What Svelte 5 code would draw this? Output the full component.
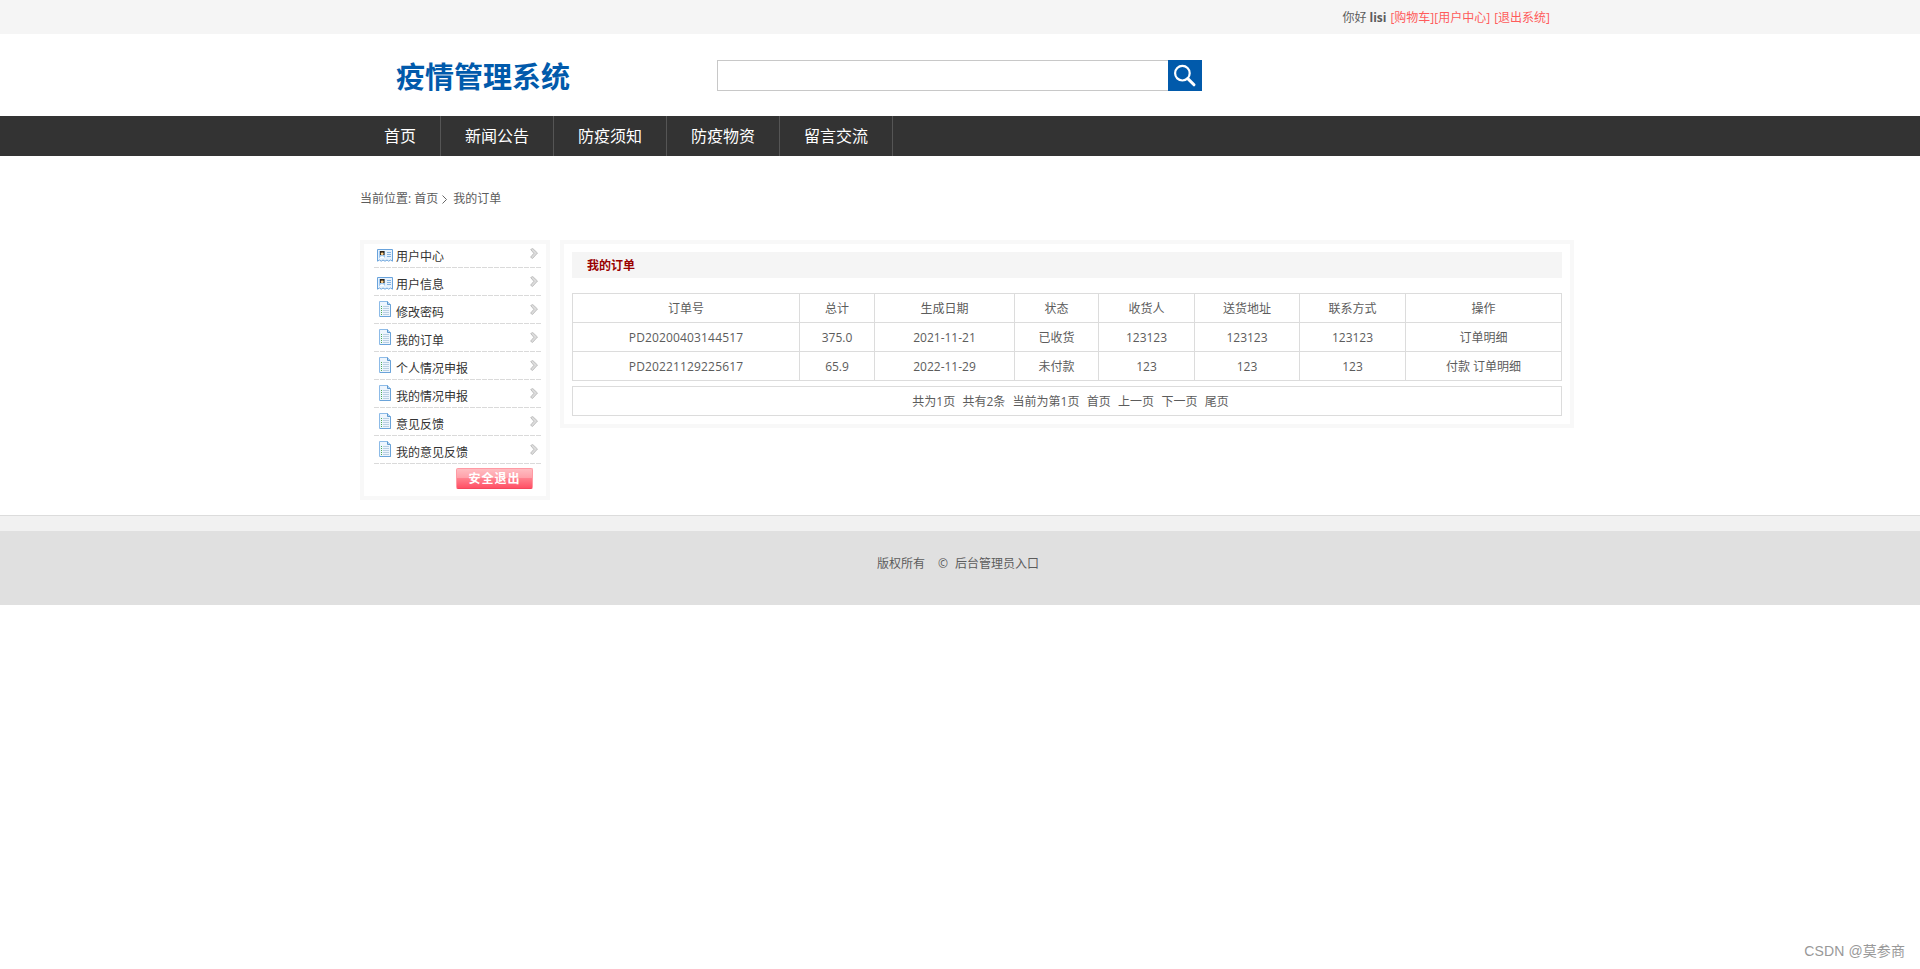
<script>
  const nav = ['首页', '新闻公告', '防疫须知', '防疫物资', '留言交流'];
  const menu = [
    { label: '用户中心', icon: 'card' },
    { label: '用户信息', icon: 'card' },
    { label: '修改密码', icon: 'doc' },
    { label: '我的订单', icon: 'doc' },
    { label: '个人情况申报', icon: 'doc' },
    { label: '我的情况申报', icon: 'doc' },
    { label: '意见反馈', icon: 'doc' },
    { label: '我的意见反馈', icon: 'doc' }
  ];
  const columns = ['订单号', '总计', '生成日期', '状态', '收货人', '送货地址', '联系方式', '操作'];
  const widths = [227, 75, 140, 84, 96, 105, 106, 156];
  const orders = [
    ['PD20200403144517', '375.0', '2021-11-21', '已收货', '123123', '123123', '123123', '订单明细'],
    ['PD20221129225617', '65.9', '2022-11-29', '未付款', '123', '123', '123', '付款 订单明细']
  ];
  const pager = ['共为1页', '共有2条', '当前为第1页', '首页', '上一页', '下一页', '尾页'];
</script>

<div class="page">
  <div class="topbar">
    <div class="greet">
      <span class="hello">你好</span><b>lisi</b><a class="cart">[购物车]</a><a class="center">[用户中心]</a><a>[退出系统]</a>
    </div>
  </div>

  <header>
    <h1>疫情管理系统</h1>
    <div class="search">
      <input type="text" aria-label="搜索" />
      <button aria-label="搜索">
        <svg width="34" height="31" viewBox="0 0 34 31" fill="none" stroke="#fff">
          <circle cx="14.4" cy="13.2" r="7.3" stroke-width="2.2" />
          <path d="M19.8 18.6 26 24.8" stroke-width="3" stroke-linecap="round" />
        </svg>
      </button>
    </div>
  </header>

  <nav>
    {#each nav as item}<a>{item}</a>{/each}
  </nav>

  <div class="crumb">
    <span>当前位置:</span><span class="home">首页</span>
    <svg width="5" height="9" viewBox="0 0 5 9" fill="none" stroke="#666"><path d="M.5.5l4 4-4 4" /></svg>
    <span>我的订单</span>
  </div>

  <main>
    <aside>
      <ul>
        {#each menu as m}
          <li>
            <span class="icon {m.icon}">
              {#if m.icon === 'card'}
                <svg width="16" height="13" viewBox="0 0 16 13">
                  <path d="M.5.5h15v11.7l-2-1.2-1.8 1.2L10 11l-2 1.2L6 11l-1.8 1.2L2.500 11l-2 1.2z" fill="#e6f1fc" stroke="#69a3dc" />
                  <path d="M2 2h6v7H2z" fill="#9cc6ef" />
                  <path d="M3 2h4.500v4H3z" fill="#2f2418" />
                  <circle cx="5.200" cy="4.800" r="1.400" fill="#ffd08a" />
                  <path d="M2.600 9c.3-2.400 4.800-2.400 5.100 0z" fill="#fff" />
                  <path d="M10 3.500h4M10 5.500h4M10 7.500h4" stroke="#85b2df" />
                </svg>
              {:else}
                <svg width="12" height="16" viewBox="0 0 12 16">
                  <path d="M.5.5h8l3 3v12H.5z" fill="#edf5fd" stroke="#8dbbe8" />
                  <path d="M11.500 4v11.500H1" fill="none" stroke="#6ba4da" />
                  <path d="M8.500.5v3h3" fill="#b8d6f2" stroke="#5d98cf" />
                  <path d="M4 5.500h6M4 7.500h6M4 9.500h6M4 11.500h6M4 13.500h6" stroke="#b9cfe3" />
                  <path d="M2 5.500h1M2 7.500h1M2 9.500h1M2 11.500h1M2 13.500h1" stroke="#4fae58" />
                </svg>
              {/if}
            </span>
            <a>{m.label}</a>
            <svg class="arrow" width="8" height="11" viewBox="0 0 8 11">
              <path d="M.7 1.500 2.700.5 7.500 5 2.500 10.500.6 9.200 3.800 5.300z" fill="#dcdcdc" stroke="#b5b5b5" stroke-width=".8" />
            </svg>
          </li>
        {/each}
      </ul>
      <button class="logout">安全退出</button>
    </aside>

    <section>
      <h2>我的订单</h2>
      <table>
        <colgroup>{#each widths as w}<col style="width:{w}px" />{/each}</colgroup>
        <tbody>
          <tr>{#each columns as c}<td>{c}</td>{/each}</tr>
          {#each orders as row}
            <tr>{#each row as cell}<td>{cell}</td>{/each}</tr>
          {/each}
        </tbody>
      </table>
      <div class="pager">{#each pager as p}<span>{p}</span>{/each}</div>
    </section>
  </main>

  <footer>
    <div class="strip"></div>
    <div class="copy"><span>版权所有</span><span class="mark">©</span><span>后台管理员入口</span></div>
  </footer>

  <div class="watermark">CSDN @莫参商</div>
</div>

<style>
  :global(body) { margin: 0; background: #fff; }
  .page {
    position: relative;
    height: 969px;
    overflow: hidden;
    font: 12px/20px "Open Sans", "Noto Sans CJK SC", sans-serif;
    color: #5c5c5c;
    box-sizing: border-box;
  }
  .topbar { height: 34px; background: #f5f5f5; }
  .greet {
    width: 1200px;
    margin: 0 auto;
    padding-right: 10px;
    line-height: 36px;
    display: flex;
    justify-content: flex-end;
    box-sizing: border-box;
  }
  .hello { margin-right: 3px; }
  .greet b { margin-right: 4px; }
  .greet a { color: #ff5b5b; }
  .greet .center { margin-right: 4px; }
  header {
    height: 82px;
    width: 1200px;
    margin: 0 auto;
    display: flex;
  }
  h1 {
    margin: 21px 0 0 36px;
    width: 321px;
    font: bold 29px/40px "Noto Sans CJK SC", sans-serif;
    color: #015aab;
  }
  .search { display: flex; margin-top: 26px; height: 31px; }
  input {
    width: 451px;
    height: 31px;
    box-sizing: border-box;
    border: 1px solid #c8c8c8;
    border-right: 0;
    padding: 0 8px;
    background: #fff;
    outline: 0;
    border-radius: 0;
  }
  .search button { width: 34px; height: 31px; padding: 0; border: 0; background: #015aab; }
  .search svg { display: block; }
  nav {
    height: 40px;
    padding-left: 360px;
    background: #333;
    display: flex;
  }
  nav a {
    padding: 0 24px;
    border-right: 1px solid #555;
    font-size: 16px;
    line-height: 40px;
    color: #fff;
  }
  .crumb {
    height: 84px;
    box-sizing: border-box;
    padding: 2px 0 0 360px;
    display: flex;
    align-items: center;
  }
  .crumb .home { margin-left: 3px; }
  .crumb svg { margin: 0 6px 0 4px; }
  main {
    width: 1214px;
    margin-left: 360px;
    display: flex;
    align-items: flex-start;
    gap: 10px;
    height: 275px;
  }
  aside {
    width: 190px;
    height: 260px;
    box-sizing: border-box;
    border: 4px solid #f8f8f8;
    padding: 0 5px 0 10px;
  }
  ul { margin: 0; padding: 0; list-style: none; }
  li {
    height: 28px;
    box-sizing: border-box;
    display: flex;
    padding-left: 3px;
    color: #333;
    background: repeating-linear-gradient(90deg, #dadada 0 5px, #fff 5px 6px) bottom / 100% 1px no-repeat;
  }
  li:first-child { height: 24px; }
  li a { line-height: 20px; margin-top: 7px; flex: 1; }
  li:first-child a { margin-top: 3px; }
  .icon { width: 19px; padding-top: 9px; box-sizing: border-box; }
  .icon.doc { padding: 5px 0 0 2px; }
  li:first-child .icon { padding-top: 5px; }
  .icon svg { display: block; }
  .arrow { margin: 8px 3px 0 0; }
  li:first-child .arrow { margin-top: 4px; }
  .logout {
    display: block;
    width: 77px;
    height: 21px;
    margin: 4px 8px 0 auto;
    padding: 0 0 2px;
    border: 1px solid #ff9aa4;
    border-bottom-color: #f4475c;
    border-radius: 2px;
    background: linear-gradient(#ffbcc1, #ffa0a9 47%, #ff808d 50%, #ff5065);
    font: bold 12px/17px "Noto Sans CJK SC", sans-serif;
    letter-spacing: 1px;
    color: #fff;
  }
  section {
    width: 1014px;
    height: 188px;
    box-sizing: border-box;
    border: 4px solid #f8f8f8;
    padding: 8px;
  }
  h2 {
    margin: 0 0 15px;
    padding-left: 15px;
    height: 26px;
    font-size: 12px;
    line-height: 28px;
    color: #900;
    background: #f5f5f5;
  }
  table {
    width: 990px;
    table-layout: fixed;
    border-collapse: separate;
    border-spacing: 0;
    border: solid #dcdcdc;
    border-width: 1px 0 0 1px;
  }
  td {
    height: 29px;
    box-sizing: border-box;
    padding: 2px 0 0;
    border: solid #dcdcdc;
    border-width: 0 1px 1px 0;
    text-align: center;
    line-height: 20px;
  }
  tr:not(:first-child) td:first-child { letter-spacing: .15px; }
  .pager {
    margin-top: 5px;
    height: 30px;
    box-sizing: border-box;
    border: 1px solid #dcdcdc;
    padding-left: 7px;
    display: flex;
    justify-content: center;
    gap: 7.3px;
    line-height: 29px;
  }
  .strip { height: 15px; border-top: 1px solid #dcdcdc; background: #f1f1f1; }
  .copy {
    height: 74px;
    background: #e0e0e0;
    padding-left: 877px;
    line-height: 66px;
    display: flex;
  }
  .mark { margin: 0 7px 0 13px; }
  .watermark {
    position: absolute;
    right: 15px;
    bottom: 8px;
    font: 14px/20px "Liberation Sans", "Noto Sans CJK SC", sans-serif;
    letter-spacing: .1px;
    color: #999;
  }
</style>
